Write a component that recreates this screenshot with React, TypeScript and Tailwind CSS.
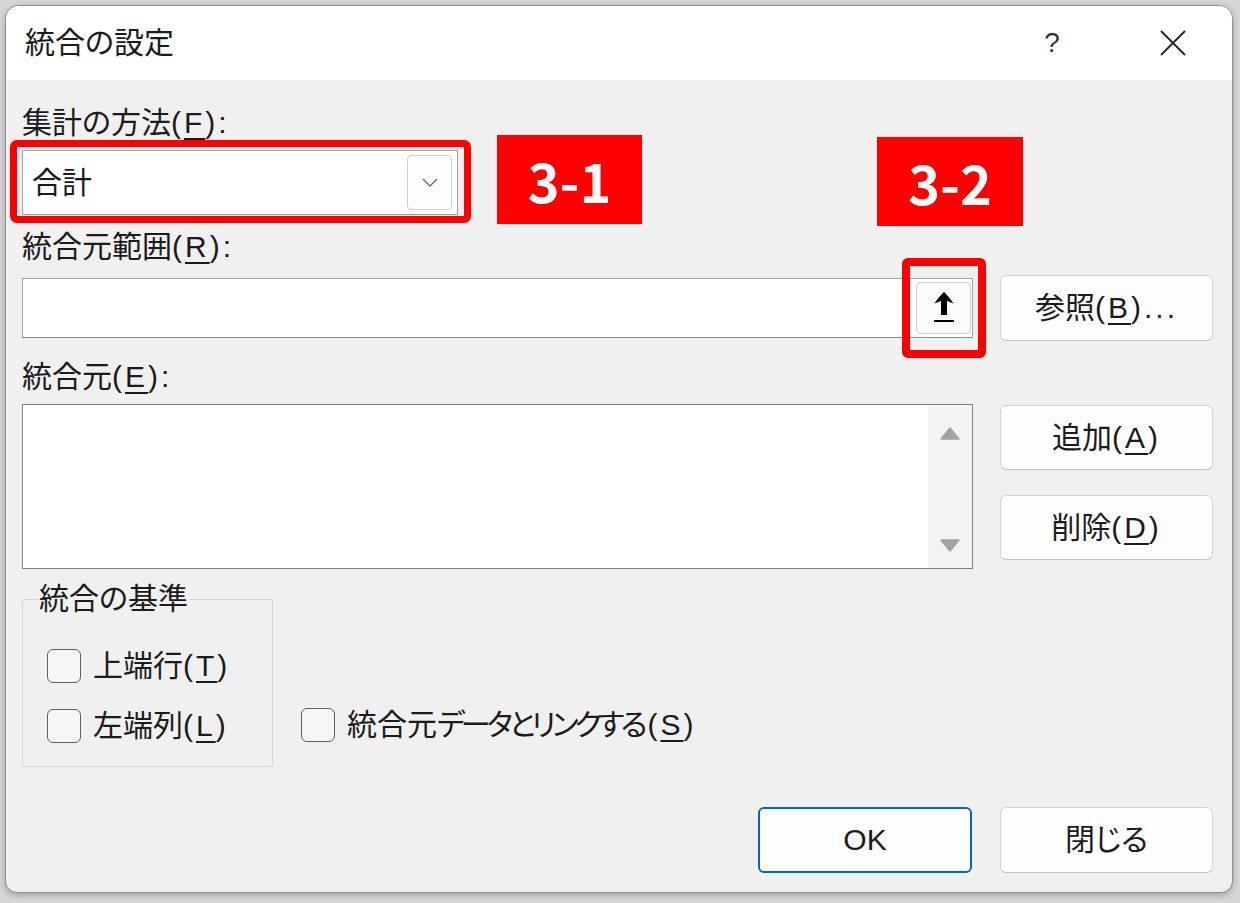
import React from "react";

function U({ c }: { c: string }) {
  return <span className="underline decoration-[1.5px] underline-offset-[5px]">{c}</span>;
}

function L({ children }: { children: React.ReactNode }) {
  return <span className="tracking-[3px]">{children}</span>;
}

function Btn({ children, w = "w-[213px]", h = "h-[66px]", primary = false }: { children: React.ReactNode; w?: string; h?: string; primary?: boolean }) {
  return (
    <div
      className={
        "flex items-center justify-center rounded-[6px] bg-[#fdfdfd] leading-[40px] " +
        w +
        " " +
        h +
        " " +
        (primary ? "border-2 border-[#0067c0]" : "border border-[#d3d3d3] border-b-[#c4c4c4]")
      }
    >
      {children}
    </div>
  );
}

function Check({ children }: { children: React.ReactNode }) {
  return (
    <div className="flex items-center h-[40px]">
      <div className="w-[34px] h-[34px] rounded-[6px] border-[1.5px] border-[#5f5f5f] bg-[#f6f6f6]" />
      <span className="ml-[12px] leading-[40px]">{children}</span>
    </div>
  );
}

export default function App() {
  return (
    <div className="relative w-[1240px] h-[903px] overflow-hidden bg-[#d6d6d6] pl-[5px] pt-[5px] font-['Liberation_Sans','Noto_Sans_CJK_JP',sans-serif] text-[30px] text-[#1b1b1b] [font-feature-settings:'palt']">
      <div className="w-[1228px] h-[888px] rounded-t-[14px] rounded-b-[12px] border border-[#8f8f8f] bg-[#f0f0f0] overflow-hidden flex flex-col shadow-[0_2px_6px_rgba(0,0,0,0.25)]">
        {/* title bar */}
        <div className="h-[74px] bg-white flex items-center pl-[19px] pr-[45px]">
          <span className="flex-1 leading-[40px]">統合の設定</span>
          <span className="w-[16px] text-center text-[28px] text-[#333] leading-[40px]">?</span>
          <svg className="ml-[99px]" width="28" height="28" viewBox="0 0 28 28">
            <path d="M2 2 L26 26 M26 2 L2 26" stroke="#222" strokeWidth="1.8" fill="none" />
          </svg>
        </div>

        {/* body */}
        <div className="flex-1 flex flex-col pl-[16px] pr-[19px] pt-[23px]">
          <div className="leading-[40px] h-[40px]">
            集計の方法<L>(<U c="F" />):</L>
          </div>
          <div className="mt-[7px] w-[436px] h-[65px] bg-white border border-[#a3a3a3] flex items-center pl-[9px] pr-[5px]">
            <span className="flex-1 leading-[40px]">合計</span>
            <div className="w-[45px] h-[55px] rounded-[4px] border border-[#d0d0d0] bg-[#fdfdfd] flex items-center justify-center">
              <svg width="16" height="9" viewBox="0 0 16 9">
                <path d="M1 1 L8 8 L15 1" stroke="#6a6a6a" strokeWidth="1.3" fill="none" />
              </svg>
            </div>
          </div>

          <div className="mt-[12px] leading-[40px] h-[40px]">
            統合元範囲<L>(<U c="R" />):</L>
          </div>
          <div className="mt-[8px] flex items-center h-[66px]">
            <div className="w-[951px] h-[60px] bg-white border border-[#a3a3a3] border-b-[#8a8a8a] flex items-center justify-end pr-[1px]">
              <div className="w-[55px] h-[52px] rounded-[4px] border border-[#cfcfcf] bg-[#fbfbfb] flex items-center justify-center">
                <svg width="22" height="34" viewBox="0 0 22 34">
                  <path d="M11 1 C13 3 17 7 20.5 12.5 L14 10 L14 24 L8 24 L8 10 L1.5 12.5 C5 7 9 3 11 1 Z" fill="#000" />
                  <rect x="1" y="29" width="20" height="2" fill="#000" />
                </svg>
              </div>
            </div>
            <div className="ml-[27px]">
              <Btn>
                参照<L>(<U c="B" />)...</L>
              </Btn>
            </div>
          </div>

          <div className="mt-[16px] leading-[40px] h-[40px]">
            統合元<L>(<U c="E" />):</L>
          </div>
          <div className="mt-[7px] flex items-start">
            <div className="w-[951px] h-[165px] bg-white border border-[#828282] flex justify-end">
              <div className="w-[44px] h-full bg-[#f3f3f3] flex flex-col items-center justify-between pt-[22px] pb-[16px]">
                <svg width="20" height="13" viewBox="0 0 20 13">
                  <path d="M10 1 L19 12 L1 12 Z" fill="#a3a3a3" stroke="#a3a3a3" strokeLinejoin="round" strokeWidth="1.5" />
                </svg>
                <svg width="20" height="13" viewBox="0 0 20 13">
                  <path d="M1 1 L19 1 L10 12 Z" fill="#a3a3a3" stroke="#a3a3a3" strokeLinejoin="round" strokeWidth="1.5" />
                </svg>
              </div>
            </div>
            <div className="ml-[27px] mt-[1px] flex flex-col gap-[25px]">
              <Btn h="h-[65px]">
                追加<L>(<U c="A" />)</L>
              </Btn>
              <Btn h="h-[65px]">
                削除<L>(<U c="D" />)</L>
              </Btn>
            </div>
          </div>

          <div className="mt-[30px] flex items-start">
            <div className="relative w-[251px] h-[168px] border border-[#d6d6d6] rounded-[2px] pt-[46px] pl-[24px] flex flex-col gap-[20px]">
              <div className="absolute left-[15px] top-[-21px] bg-[#f0f0f0] px-[1px] leading-[40px]">統合の基準</div>
              <Check>
                上端行<L>(<U c="T" />)</L>
              </Check>
              <Check>
                左端列<L>(<U c="L" />)</L>
              </Check>
            </div>
            <div className="ml-[28px] mt-[106px]">
              <Check>
                統合元<span className="tracking-[-4px]">データとリンクする</span>
                <span className="ml-[4px]">
                  <L>(<U c="S" />)</L>
                </span>
              </Check>
            </div>
          </div>

          <div className="mt-[40px] flex justify-end gap-[28px]">
            <Btn w="w-[214px]" primary>
              OK
            </Btn>
            <Btn>閉じる</Btn>
          </div>
        </div>
      </div>

      {/* annotations */}
      <div className="absolute left-[10px] top-[140px] w-[461px] h-[83px] border-[7px] border-[#ff0000] rounded-[7px]" />
      <div className="absolute left-[497px] top-[135px] w-[145px] h-[89px] bg-[#ff0000] flex items-center justify-center text-white font-bold text-[54px] font-['Noto_Sans_CJK_JP',sans-serif] leading-none [font-feature-settings:normal]">
        3-1
      </div>
      <div className="absolute left-[877px] top-[137px] w-[146px] h-[89px] bg-[#ff0000] flex items-center justify-center text-white font-bold text-[54px] font-['Noto_Sans_CJK_JP',sans-serif] leading-none [font-feature-settings:normal]">
        3-2
      </div>
      <div className="absolute left-[902px] top-[258px] w-[84px] h-[100px] border-[8px] border-[#ff0000] rounded-[6px]" />
    </div>
  );
}
